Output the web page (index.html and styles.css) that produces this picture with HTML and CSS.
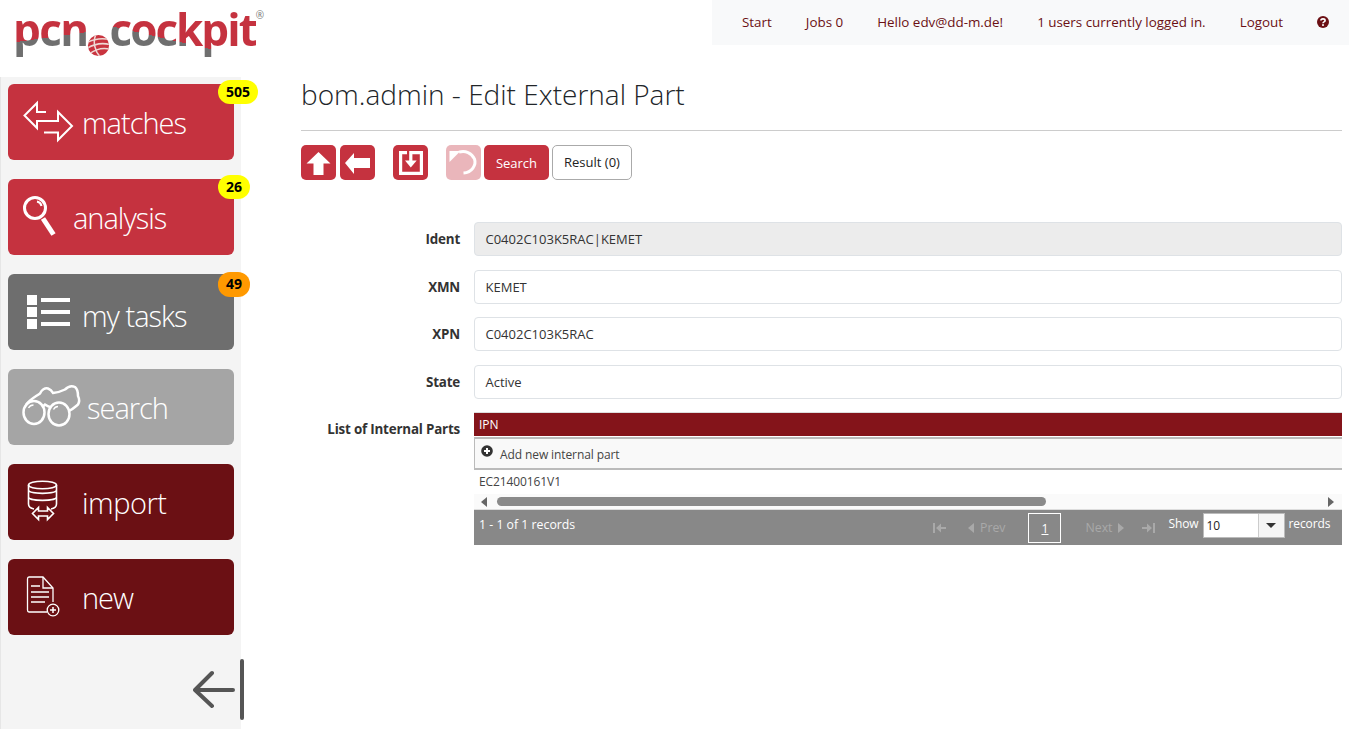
FILE: index.html
```html
<!DOCTYPE html>
<html lang="en">
<head>
<meta charset="utf-8">
<title>bom.admin - Edit External Part</title>
<link rel="stylesheet" href="styles.css">
</head>
<body>
<header class="top">
  <div class="logo">
    <span class="logo-a">pcn</span>
    <svg class="logo-ball" viewBox="0 0 24 24" aria-hidden="true">
      <defs><clipPath id="ball"><circle cx="12" cy="12" r="11"/></clipPath></defs>
      <circle cx="12" cy="12" r="11" fill="#c9343f"/>
      <g clip-path="url(#ball)" fill="none" stroke="#eed9d5" stroke-width="1.6">
        <path d="M0 9 C8 5 16 4 24 6"/><path d="M0 15 C8 10 16 9 24 11"/><path d="M2 21 C9 16 17 14 24 16"/><path d="M9 1 C6 8 8 18 14 24"/>
      </g>
    </svg>
    <span class="logo-b">cockpit</span>
    <span class="logo-r">®</span>
  </div>
  <nav class="nav">
    <a class="nav-item">Start</a>
    <a class="nav-item">Jobs 0</a>
    <a class="nav-item">Hello edv@dd-m.de!</a>
    <a class="nav-item">1 users currently logged in.</a>
    <a class="nav-item">Logout</a>
    <svg class="nav-help" viewBox="0 0 12 12" aria-hidden="true">
      <circle cx="6" cy="6" r="6" fill="#6b1014"/>
      <path d="M3.9 4.6 C3.9 2.2 8.1 2.3 8.1 4.5 C8.1 6 6 5.8 6 7.2" fill="none" stroke="#fff" stroke-width="1.6"/>
      <rect x="5.1" y="8.2" width="1.8" height="1.7" fill="#fff"/>
    </svg>
  </nav>
</header>
<div class="page">
  <aside class="side">
    <a class="tile tile-red">
      <svg class="tile-icon w74" viewBox="8 84 74 76" aria-hidden="true"><path class="ln" d="M46 112H37V103L24.500 115.500 37 128V121H58V112L72 126 58 140V132.500H44"/></svg>
      <span class="tile-label">matches</span>
      <span class="badge badge-wide">505</span>
    </a>
    <a class="tile tile-red">
      <svg class="tile-icon w65" viewBox="8 179 65 76" aria-hidden="true">
        <circle class="ln3" cx="35" cy="208" r="10.500"/>
        <path class="ln" d="M37 201.500C39.500 202 41 203.500 41.500 206"/>
        <path d="M43 218.500L53.500 234.500" stroke="#fff" stroke-width="5" fill="none"/>
      </svg>
      <span class="tile-label">analysis</span>
      <span class="badge">26</span>
    </a>
    <a class="tile tile-gray">
      <svg class="tile-icon w74" viewBox="8 274 74 76" aria-hidden="true">
        <path fill="#fff" d="M27 295h10v10H27zM27 307h10v10H27zM27 319h10v10H27zM41 298h29v4H41zM41 310h29v4H41zM41 322h29v4H41z"/>
      </svg>
      <span class="tile-label tile-label-low">my tasks</span>
      <span class="badge badge-orange">49</span>
    </a>
    <a class="tile tile-light">
      <svg class="tile-icon w79" viewBox="8 369 79 76" aria-hidden="true">
        <ellipse class="ln25" cx="34" cy="412.500" rx="10.500" ry="11.500"/>
        <ellipse class="ln25" cx="59" cy="414" rx="10.500" ry="11.500"/>
        <path class="ln25" d="M26 405C29 400 35 397 40 393.500 41.500 390 45 387.500 48 388.500 51 389.500 52 391 53 393 57 392.500 62 391 65 389.500 68 386.500 72 385.500 75 387 77.500 389 78 393 78 396 79.500 399 79.500 402 78 404.500 75 407 73 409 69 411M43.500 406C44 405.500 44.500 405 45 404.500 46.500 405.500 48 406.500 50 407"/>
        <path class="ln1" d="M28.500 408C29.500 406 31.500 405 33.500 405M53.500 409.500C54.500 407.500 56 406.500 58 406.500"/>
      </svg>
      <span class="tile-label">search</span>
    </a>
    <a class="tile tile-dark">
      <svg class="tile-icon w74" viewBox="8 464 74 76" aria-hidden="true">
        <ellipse class="ln2" cx="42.500" cy="485" rx="14" ry="3.800"/>
        <path class="ln2" d="M28.500 485V497C28.500 501.500 56.500 501.500 56.500 497V485M28.500 490C29 494.500 56 494.500 56.500 490M28.500 497V504C28.500 507.500 31.500 508.500 34 509M56.500 497V504C56.500 507.500 53.500 508.500 51 509"/>
        <path class="ln2" d="M44 511H38.500V507.500L32.500 513.500 38.500 519.500V516H47.500V519.500L53.500 513.500 47.500 507.500V511H44"/>
      </svg>
      <span class="tile-label tile-label-wide">import</span>
    </a>
    <a class="tile tile-dark">
      <svg class="tile-icon w74" viewBox="8 559 74 76" aria-hidden="true">
        <path class="ln1" d="M47 612H29Q27.500 612 27.500 610V579Q27.500 577 29 577H43L53 588V602"/>
        <path class="ln1" d="M43 577V588H53M31 586H40M31 592H49M31 597H49M31 602H45"/>
        <circle class="ln1" cx="53" cy="610" r="5.800"/>
        <path d="M50 610H56M53 607V613" stroke="#fff" stroke-width="1.500"/>
      </svg>
      <span class="tile-label">new</span>
    </a>
    <svg class="collapse" viewBox="0 0 52 62" aria-hidden="true">
      <path d="M19 14L2 31 19 47M2 31H40" fill="none" stroke="#555" stroke-width="4" stroke-linecap="round" stroke-linejoin="round"/>
      <path d="M49 2V59" stroke="#555" stroke-width="4" stroke-linecap="round"/>
    </svg>
  </aside>
  <main class="main">
    <h1 class="title">bom.admin - Edit External Part</h1>
    <div class="toolbar">
      <button class="tool" aria-label="Up"><svg viewBox="0 0 35 35"><path fill="#fff" d="M17.500 7L29.500 18.500H22.500V30H12.500V18.500H5.500z"/></svg></button>
      <button class="tool tool-left" aria-label="Back"><svg viewBox="0 0 35 35"><path fill="#fff" d="M5 18L14 8V13H30V23H14V29z"/></svg></button>
      <button class="tool tool-save" aria-label="Save"><svg viewBox="0 0 35 35"><path fill="none" stroke="#fff" stroke-width="3.200" d="M14 7.600H7.600V28.400H28.400V7.600H17.800V17"/><path fill="#fff" d="M12 15.500H23.700L17.800 22.500z"/></svg></button>
      <button class="tool tool-undo" aria-label="Undo"><svg viewBox="0 0 35 35"><path fill="none" stroke="#fff" stroke-width="3" d="M13 7.200C19 5 26 8 28.500 14 30.500 20 26 27.500 17.500 28"/><path fill="#fff" d="M3.500 6H14.500L3.500 17z"/></svg></button>
      <button class="btn btn-red">Search</button>
      <button class="btn btn-white">Result (0)</button>
    </div>
    <form class="form">
      <div class="row"><label class="lbl">Ident</label><div class="field field-off">C0402C103K5RAC|KEMET</div></div>
      <div class="row"><label class="lbl">XMN</label><div class="field">KEMET</div></div>
      <div class="row"><label class="lbl">XPN</label><div class="field">C0402C103K5RAC</div></div>
      <div class="row"><label class="lbl">State</label><div class="field">Active</div></div>
      <div class="row row-grid">
        <label class="lbl lbl-grid">List of Internal Parts</label>
        <div class="grid">
          <div class="grid-head">IPN</div>
          <div class="grid-add">
            <svg class="add-icon" viewBox="0 0 12 12" aria-hidden="true"><circle cx="6" cy="6" r="5.800" fill="#333"/><path d="M3 6H9M6 3V9" stroke="#fff" stroke-width="2"/></svg>
            <span>Add new internal part</span>
          </div>
          <div class="grid-cell">EC21400161V1</div>
          <div class="scroll">
            <span class="arrow-l"></span>
            <span class="thumb"></span>
            <span class="arrow-r"></span>
          </div>
          <div class="pager">
            <span class="pager-info">1 - 1 of 1 records</span>
            <div class="pager-nav">
              <span class="pg pg-first"><svg class="pg-ic" viewBox="0 0 14 12"><path d="M1 1h2v10H1zM4 6l5-4.500V5h5v2H9v3.500z" fill="#a9a9a9"/></svg></span>
              <span class="pg pg-prev"><i class="tri-l"></i>Prev</span>
              <span class="pg-cur">1</span>
              <span class="pg pg-next">Next<i class="tri-r"></i></span>
              <span class="pg pg-last"><svg class="pg-ic" viewBox="0 0 14 12"><path d="M13 1h-2v10h2zM10 6L5 1.500V5H0v2h5v3.500z" fill="#a9a9a9"/></svg></span>
            </div>
            <div class="pager-size">
              <span>Show</span>
              <div class="size-box"><span class="size-val">10</span><span class="size-btn"><i class="tri-d"></i></span></div>
              <span>records</span>
            </div>
          </div>
        </div>
      </div>
    </form>
  </main>
</div>
</body>
</html>
```
FILE: styles.css
```css
* { box-sizing: border-box; }
html, body { margin: 0; height: 729px; overflow: hidden; background: #fff; }
body { font-family: "Open Sans", "Liberation Sans", sans-serif; color: #212529; font-size: 13.400px; }

.top { display: flex; height: 77px; align-items: flex-start; }
.logo { width: 712px; display: flex; align-items: flex-start; padding: 0 0 0 13px; height: 77px; }
.logo-a, .logo-b { font: 700 44px/58px "Open Sans", sans-serif; -webkit-background-clip: text; background-clip: text; color: transparent; }
.logo-a { letter-spacing: -1.600px; background-image: linear-gradient(172deg, #c5323f 62%, #6f6f6f 62%); }
.logo-b { letter-spacing: -2px; background-image: linear-gradient(193deg, #c5323f 65%, #6f6f6f 65%); }
.logo-ball { width: 23px; height: 23px; margin: 34px 0 0 -1px; flex: none; }
.logo-r { font-size: 10px; color: #777; line-height: 12px; margin: 9px 0 0 0; }

.nav { flex: 1; height: 45px; background: #f8f9fa; display: flex; align-items: center; justify-content: flex-end; gap: 34px; padding: 0 20px 2px 0; color: #6b1014; }
.nav-help { width: 12px; height: 12px; }

.page { display: flex; height: 652px; }
.side { width: 241px; background: #f4f4f4; border-left: 1px solid #e6e6e6; padding: 7px 0 0 7px; display: flex; flex-direction: column; gap: 19px; }
.tile { position: relative; display: flex; align-items: center; width: 226px; height: 76px; flex: none; border-radius: 6px; color: #fff; font-weight: 300; font-size: 29px; }
.tile-red { background: #c5323f; }
.tile-gray { background: #6e6e6e; }
.tile-light { background: #a5a5a5; }
.tile-dark { background: #6b1014; }
.tile-icon { height: 76px; flex: none; }
.w74 { width: 74px; }
.w65 { width: 65px; }
.w79 { width: 79px; }
.ln { fill: none; stroke: #fff; stroke-width: 2; }
.ln1 { fill: none; stroke: #fff; stroke-width: 1.300; }
.ln2 { fill: none; stroke: #fff; stroke-width: 1.600; }
.ln25 { fill: none; stroke: #fff; stroke-width: 2.500; }
.ln3 { fill: none; stroke: #fff; stroke-width: 3; }
.tile-label { line-height: 76px; letter-spacing: -1px; padding-top: 2px; }
.tile-label-low { padding-top: 8px; }
.tile-label-wide { letter-spacing: -0.5px; }
.badge { position: absolute; top: -4px; left: 210px; width: 32px; height: 24px; border-radius: 12px; background: #ff0; color: #000; font-weight: 700; font-size: 14px; line-height: 24px; text-align: center; }
.badge-wide { width: 40px; }
.badge-orange { background: #f90; top: -2px; height: 25px; }
.collapse { width: 52px; height: 62px; flex: none; margin: 5px 0 0 185px; }

.main { flex: 1; padding: 0 7px 0 60px; min-width: 0; }
.title { margin: 0; font-size: 28px; font-weight: 300; line-height: 34px; color: #212529; height: 54px; border-bottom: 1px solid #ccc; }
.toolbar { display: flex; align-items: flex-start; margin-top: 14px; }
.tool { width: 35px; height: 35px; border: 0; padding: 0; border-radius: 5px; background: #c5323f; display: block; margin-right: 4px; flex: none; }
.tool svg { display: block; width: 35px; height: 35px; }
.tool-left { margin-right: 18px; }
.tool-save { margin-right: 18px; }
.tool-undo { opacity: .35; margin-right: 3px; }
.btn { font: 13px "Open Sans", sans-serif; height: 35px; border-radius: 5px; padding: 0; }
.btn-red { width: 65px; background: #c5323f; color: #fff; border: 0; margin-right: 3px; }
.btn-white { width: 80px; background: #fff; color: #222; border: 1px solid #aaa; padding-bottom: 1px; }

.form { margin-top: 42px; }
.row { display: flex; align-items: flex-start; height: 47.500px; }
.lbl { width: 159px; flex: none; text-align: right; font-weight: 700; font-size: 13.400px; color: #333; line-height: 34px; letter-spacing: -0.2px; }
.field { flex: 1; margin-left: 14px; height: 34px; border: 1px solid #dee2e6; border-radius: 4px; padding: 0 10.500px; line-height: 32px; font-size: 13px; color: #333; background: #fff; min-width: 0; }
.field-off { background: #ececec; }
.row-grid { height: auto; }
.lbl-grid { line-height: 34px; }
.grid { flex: 1; margin-left: 14px; min-width: 0; font-size: 12px; border-top: 1px solid #ddd; }
.grid-head { background: #84141a; color: #fff; height: 23px; line-height: 23px; padding-left: 5px; }
.grid-add { background: #f9f9f9; height: 33px; margin-top: 1px; border: solid #bbb; border-width: 2px 0 2px 1px; display: flex; align-items: center; padding: 2px 0 0 6px; color: #444; letter-spacing: -0.1px; }
.add-icon { width: 12px; height: 12px; margin: -8px 7px 0 0; }
.grid-cell { height: 24px; line-height: 24px; padding-left: 5px; color: #444; letter-spacing: -0.1px; }
.scroll { height: 16px; background: #fafafa; display: flex; align-items: center; padding: 0 8px 0 7px; border-bottom: 1px solid #ddd; }
.arrow-l { border: 5px solid transparent; border-right: 6px solid #666; border-left: 0; }
.thumb { width: 549px; height: 9px; background: #8a8a8a; border-radius: 5px; margin-left: 10px; }
.arrow-r { border: 5px solid transparent; border-left: 6px solid #666; border-right: 0; margin-left: auto; }
.pager { height: 35px; background: #888; color: #fff; display: flex; align-items: center; padding: 0 0 0 5px; font-size: 12.300px; }
.pager-info { width: 436px; padding-bottom: 6px; flex: none; }
.pager-nav { display: flex; align-items: center; color: #a9a9a9; }
.pg-ic { width: 14px; height: 12px; display: block; }
.pg { display: flex; align-items: center; }
.pg-first { margin: 0 0 0 17px; }
.pg-prev { margin-left: 22px; }
.pg-cur { width: 33px; height: 30px; margin: 0 24px 0 23px; border: 1px solid #fff; color: #fff; text-align: center; line-height: 30px; text-decoration: underline; }
.pg-last { margin-left: 18px; }
.tri-l { border: 5px solid transparent; border-right: 6px solid #a9a9a9; border-left: 0; margin-right: 6px; }
.tri-r { border: 5px solid transparent; border-left: 6px solid #a9a9a9; border-right: 0; margin-left: 6px; }
.pager-size { display: flex; align-items: flex-start; margin-left: 12px; gap: 4px; line-height: 22px; height: 25px; margin-top: -5px; font-size: 12px; letter-spacing: -0.1px; }
.size-box { display: flex; width: 82px; height: 25px; background: #fff; color: #222; border: 1px solid #bbb; }
.size-val { width: 54px; padding-left: 3px; line-height: 23px; }
.size-btn { flex: 1; background: #f5f5f5; border-left: 1px solid #ccc; display: flex; align-items: center; justify-content: center; }
.tri-d { border: 5px solid transparent; border-top: 5px solid #333; border-bottom: 0; }
```
